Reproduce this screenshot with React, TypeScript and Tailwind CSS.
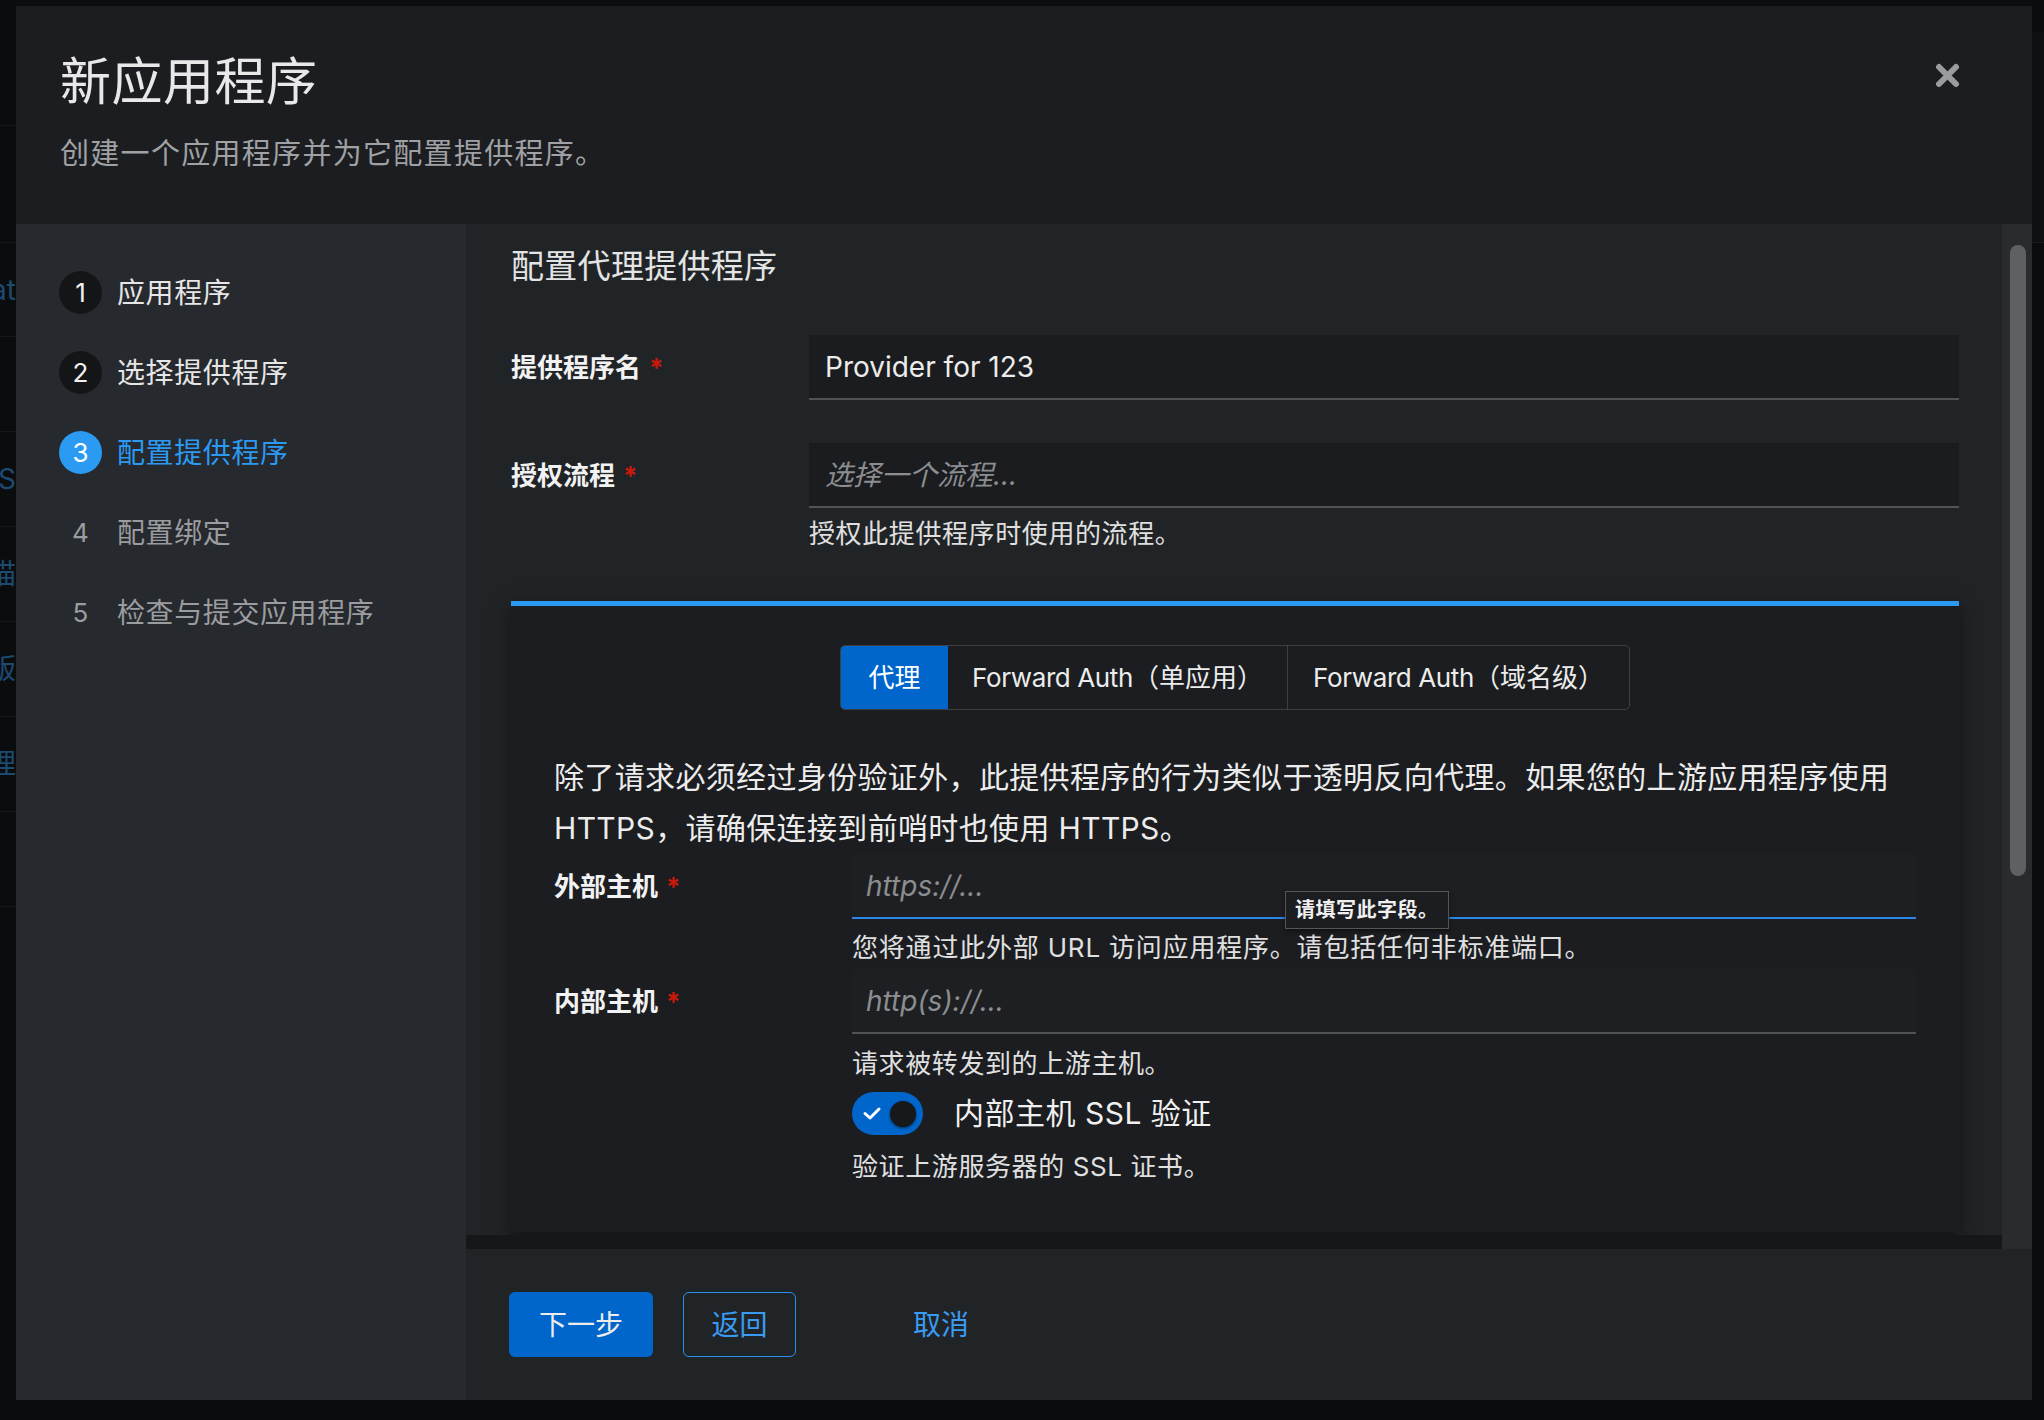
import React from "react";

const steps = [
  { n: 1, label: "应用程序", state: "done" },
  { n: 2, label: "选择提供程序", state: "done" },
  { n: 3, label: "配置提供程序", state: "current" },
  { n: 4, label: "配置绑定", state: "todo" },
  { n: 5, label: "检查与提交应用程序", state: "todo" },
];

const bgRows = [
  { h: 126, t: "" },
  { h: 117, t: "" },
  { h: 94, t: "Authenticat" },
  { h: 95, t: "" },
  { h: 95, t: "OAuth2/OIDS" },
  { h: 95, t: "扫描" },
  { h: 95, t: "出版" },
  { h: 95, t: "管理" },
  { h: 95, t: "" },
];

function Required() {
  return <span className="ml-[8px] text-[#c9190b]">*</span>;
}

export default function App() {
  return (
    <div className="flex w-[2044px] h-[1420px] overflow-hidden bg-[#0b0c0d] font-['Inter','Noto_Sans_CJK_SC',sans-serif] text-[#e0e0e0]">
      {/* background app strip */}
      <div className="w-[16px] shrink-0 overflow-hidden flex flex-col">
        {bgRows.map((r, i) => (
          <div
            key={i}
            style={{ height: r.h }}
            className="border-b border-[#161718] flex items-center justify-end whitespace-nowrap text-[28px] text-[#1d4a70]"
          >
            {r.t}
          </div>
        ))}
      </div>

      {/* modal */}
      <div className="mt-[6px] w-[2016px] h-[1394px] shrink-0 flex flex-col">
        {/* header */}
        <div className="h-[218px] shrink-0 bg-[#1b1d21] flex justify-between">
          <div className="pl-[44px] pt-[50px]">
            <div className="text-[51px] leading-[51px] tracking-[0.5px] text-[#e8e8e8]">新应用程序</div>
            <div className="mt-[32px] text-[29px] leading-[29px] tracking-[1.3px] text-[#9fa1a4]">
              创建一个应用程序并为它配置提供程序。
            </div>
          </div>
          <div className="pt-[57px] pr-[72px]">
            <svg width="25" height="25" viewBox="0 0 25 25">
              <path
                d="M4 4 L21 21 M21 4 L4 21"
                stroke="#9a9c9f"
                strokeWidth="6"
                strokeLinecap="round"
                fill="none"
              />
            </svg>
          </div>
        </div>

        {/* body */}
        <div className="flex-1 flex min-h-0">
          {/* sidebar */}
          <div className="w-[450px] shrink-0 bg-[#26292d] pt-[47px] pl-[43px] flex flex-col gap-[37px]">
            {steps.map((s) => (
              <div key={s.n} className="h-[43px] flex items-center">
                <div
                  className={
                    "w-[43px] h-[43px] rounded-full flex items-center justify-center text-[26px] " +
                    (s.state === "done"
                      ? "bg-[#141516] text-[#f0f0f0]"
                      : s.state === "current"
                      ? "bg-[#2b9af3] text-white"
                      : "text-[#9a9c9f]")
                  }
                >
                  {s.n}
                </div>
                <div
                  className={
                    "ml-[15px] text-[28px] leading-[28px] tracking-[0.6px] " +
                    (s.state === "done"
                      ? "text-[#e6e6e6]"
                      : s.state === "current"
                      ? "text-[#2b9af3]"
                      : "text-[#9a9c9f]")
                  }
                >
                  {s.label}
                </div>
              </div>
            ))}
          </div>

          {/* main */}
          <div className="flex-1 flex flex-col min-w-0">
            <div className="h-[1025px] shrink-0 flex">
              <div className="flex-1 flex flex-col bg-[#212427] min-w-0">
                <div className="h-[1011px] shrink-0 overflow-hidden pl-[45px] pr-[43px] pt-[26px]">
                  <div className="text-[33px] leading-[33px] tracking-[0.3px] text-[#e4e4e4]">配置代理提供程序</div>

                  {/* row 1 */}
                  <div className="mt-[52px] grid grid-cols-[298px_1fr]">
                    <div className="h-[65px] flex items-center text-[26px] font-bold text-[#f2f2f2]">
                      提供程序名
                      <Required />
                    </div>
                    <div className="h-[65px] bg-[#1b1c1f] border-b-2 border-[#505356] flex items-center pl-[16px] text-[28px] text-[#ececec]">
                      Provider for 123
                    </div>
                  </div>

                  {/* row 2 */}
                  <div className="mt-[43px] grid grid-cols-[298px_1fr]">
                    <div className="h-[65px] flex items-center text-[26px] font-bold text-[#f2f2f2]">
                      授权流程
                      <Required />
                    </div>
                    <div>
                      <div className="h-[65px] bg-[#1b1c1f] border-b-2 border-[#505356] flex items-center pl-[16px] text-[28px] italic text-[#8b8d90]">
                        选择一个流程...
                      </div>
                      <div className="mt-[6px] text-[26px] leading-[39px] tracking-[0.6px] text-[#e0e0e0]">
                        授权此提供程序时使用的流程。
                      </div>
                    </div>
                  </div>

                  {/* card */}
                  <div className="mt-[48px] border-t-[5px] border-[#2b9af3] bg-[#1b1d20] shadow-[0_6px_16px_rgba(0,0,0,0.5)] px-[43px] pt-[39px] pb-[46px]">
                    <div className="flex justify-center">
                      <div className="flex h-[65px] border border-[#3d4043] rounded-[5px] overflow-hidden text-[26px]">
                        <div className="w-[107px] bg-[#0066cc] text-white flex items-center justify-center">
                          代理
                        </div>
                        <div className="w-[340px] border-r border-[#3d4043] flex items-center justify-center text-[#ececec]">
                          <span className="tracking-[-0.4px]">Forward Auth</span>（单应用）
                        </div>
                        <div className="w-[341px] flex items-center justify-center text-[#ececec]">
                          <span className="tracking-[-0.4px]">Forward Auth</span>（域名级）
                        </div>
                      </div>
                    </div>

                    <p className="mt-[42px] text-[30px] leading-[51px] tracking-[0.35px] text-[#ececec]">
                      除了请求必须经过身份验证外，此提供程序的行为类似于透明反向代理。如果您的上游应用程序使用 HTTPS，请确保连接到前哨时也使用 HTTPS。
                    </p>

                    <div className="grid grid-cols-[298px_1fr]">
                      <div className="h-[65px] flex items-center text-[26px] font-bold text-[#f2f2f2]">
                        外部主机
                        <Required />
                      </div>
                      <div>
                        <div className="relative h-[65px] bg-[#1d1f22] border-b-2 border-[#2b86e8] flex items-center pl-[14px] text-[28px] italic text-[#8b8d90]">
                          https://...
                          <div className="absolute left-[433px] top-[37px] h-[38px] px-[9px] bg-[#1c1d20] border border-[#54565a] flex items-center text-[20px] not-italic font-bold tracking-[0.5px] text-[#f0f0f0] shadow-[0_2px_4px_rgba(0,0,0,0.5)]">
                            请填写此字段。
                          </div>
                        </div>
                        <div className="mt-[9px] text-[26px] leading-[39px] tracking-[0.8px] text-[#e0e0e0]">
                          您将通过此外部 URL 访问应用程序。请包括任何非标准端口。
                        </div>
                      </div>
                    </div>

                    <div className="mt-[2px] grid grid-cols-[298px_1fr]">
                      <div className="h-[65px] flex items-center text-[26px] font-bold text-[#f2f2f2]">
                        内部主机
                        <Required />
                      </div>
                      <div>
                        <div className="h-[65px] bg-[#1d1f22] border-b-2 border-[#505356] flex items-center pl-[14px] text-[28px] italic text-[#8b8d90]">
                          http(s)://...
                        </div>
                        <div className="mt-[10px] text-[26px] leading-[39px] tracking-[0.6px] text-[#e0e0e0]">
                          请求被转发到的上游主机。
                        </div>
                        <div className="mt-[9px] flex items-center">
                          <div className="relative w-[71px] h-[43px] rounded-full bg-[#0066cc] flex items-center">
                            <svg
                              className="ml-[10px]"
                              width="20"
                              height="15"
                              viewBox="0 0 20 15"
                            >
                              <path
                                d="M3 7.5 L8 12 L17 3"
                                stroke="#ffffff"
                                strokeWidth="3"
                                strokeLinecap="round"
                                strokeLinejoin="round"
                                fill="none"
                              />
                            </svg>
                            <div className="ml-[8px] w-[26px] h-[26px] rounded-full bg-[#17181a] shadow-[0_1px_3px_rgba(0,0,0,0.6)]" />
                          </div>
                          <div className="ml-[31px] text-[30px] leading-[43px] tracking-[0.5px] text-[#f0f0f0]">
                            内部主机 SSL 验证
                          </div>
                        </div>
                        <div className="mt-[12px] text-[26px] leading-[39px] tracking-[0.6px] text-[#e0e0e0]">
                          验证上游服务器的 SSL 证书。
                        </div>
                      </div>
                    </div>
                  </div>
                </div>
                <div className="h-[14px] shrink-0 bg-[#161719]" />
              </div>
              {/* scrollbar */}
              <div className="w-[30px] shrink-0 bg-[#2a2b2c] pt-[21px] pl-[8px]">
                <div className="w-[16px] h-[631px] rounded-full bg-[#5f6061]" />
              </div>
            </div>

            {/* footer */}
            <div className="flex-1 bg-[#212427] flex items-center pl-[43px]">
              <div className="w-[144px] h-[65px] rounded-[6px] bg-[#0066cc] flex items-center justify-center text-[28px] text-[#ececec]">
                下一步
              </div>
              <div className="ml-[30px] w-[113px] h-[65px] rounded-[6px] border-[1.5px] border-[#2b8ff0] flex items-center justify-center text-[28px] text-[#3a9bf2]">
                返回
              </div>
              <div className="ml-[88px] h-[65px] px-[29px] flex items-center text-[28px] text-[#3a9bf2]">
                取消
              </div>
            </div>
          </div>
        </div>
      </div>

      {/* right strip */}
      <div className="w-[12px] shrink-0 flex flex-col">
        <div className="h-[32px]" />
        <div className="h-[211px] bg-[#0f1011] border-b border-[#1a1b1c]" />
      </div>
    </div>
  );
}
